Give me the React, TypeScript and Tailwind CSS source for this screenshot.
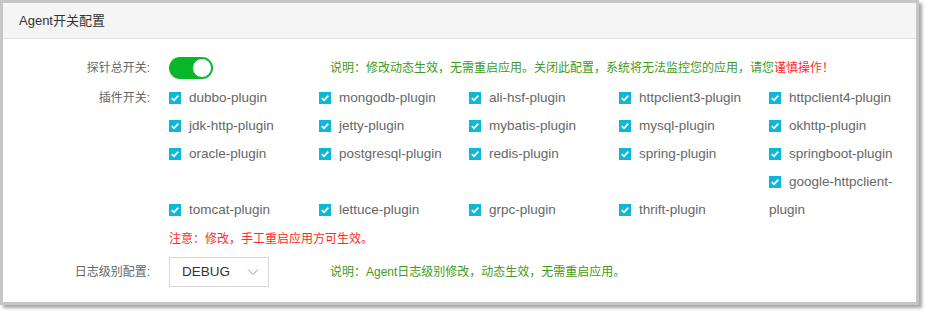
const plugins = [
  "dubbo-plugin",
  "mongodb-plugin",
  "ali-hsf-plugin",
  "httpclient3-plugin",
  "httpclient4-plugin",
  "jdk-http-plugin",
  "jetty-plugin",
  "mybatis-plugin",
  "mysql-plugin",
  "okhttp-plugin",
  "oracle-plugin",
  "postgresql-plugin",
  "redis-plugin",
  "spring-plugin",
  "springboot-plugin",
];

const lastRow = ["tomcat-plugin", "lettuce-plugin", "grpc-plugin", "thrift-plugin"];

function Check() {
  return (
    <span className="inline-flex w-[12px] h-[12px] bg-[#0cb8da] items-center justify-center align-[-1px] mr-[8px]">
      <svg width="10" height="10" viewBox="0 0 10 10">
        <path d="M1.8 5.2 L4 7.3 L8.3 2.6" fill="none" stroke="#fff" strokeWidth="1.8" />
      </svg>
    </span>
  );
}

function Plugin({ name }: { name: string }) {
  return (
    <div className="leading-[28px]">
      <Check />
      {name}
    </div>
  );
}

export default function App() {
  return (
    <div
      className="bg-white w-[929px] h-[314px]"
      style={{ fontFamily: '"Liberation Sans", "Noto Sans CJK SC", sans-serif' }}
    >
      <div className="w-[919px] h-[305px] border-[3px] border-[#c6c6c6] bg-white shadow-[3px_3px_3px_rgba(0,0,0,0.35)] flex flex-col">
        <header className="h-[36px] bg-[#f5f5f5] border-b border-[#e2e2e2] flex items-center pl-[16px] text-[13px] text-[#333]">
          Agent开关配置
        </header>

        <div className="pt-[18px] text-[12px]">
          <div className="flex items-center h-[22px]">
            <div className="w-[147px] text-right text-[#666]">探针总开关:</div>
            <div className="ml-[19px] w-[161px]">
              <div className="w-[44px] h-[22px] rounded-full bg-[#0bb52a] flex items-center justify-end pr-[1px]">
                <div className="w-[20px] h-[20px] rounded-full bg-white border border-[#0bb52a]" />
              </div>
            </div>
            <div className="text-[#3f9a22]">
              说明：修改动态生效，无需重启应用。关闭此配置，系统将无法监控您的应用，请您
              <span className="text-[#ff2b2b]">谨慎操作！</span>
            </div>
          </div>

          <div className="flex mt-[5px]">
            <div className="w-[147px] text-right text-[#666] leading-[28px]">插件开关:</div>
            <div className="ml-[19px]">
              <div className="grid grid-cols-[150px_150px_150px_150px_130px] text-[13.5px] text-[#666]">
                {plugins.map((p) => (
                  <Plugin key={p} name={p} />
                ))}
                <div className="col-start-5 row-span-2 leading-[28px]">
                  <Check />
                  google-httpclient-plugin
                </div>
                {lastRow.map((p, i) => (
                  <div key={p} className={i === 0 ? "col-start-1" : ""}>
                    <Plugin name={p} />
                  </div>
                ))}
              </div>
              <div className="mt-[4px] leading-[22px] text-[#ff2b2b]">注意：修改，手工重启应用方可生效。</div>
            </div>
          </div>

          <div className="flex items-center mt-[7px]">
            <div className="w-[147px] text-right text-[#666]">日志级别配置:</div>
            <div className="ml-[19px] w-[161px]">
              <div className="w-[100px] h-[30px] border border-[#d9d9d9] flex items-center justify-between pl-[12px] pr-[8px] text-[13.5px] text-[#333]">
                DEBUG
                <svg width="14" height="14" viewBox="0 0 14 14">
                  <path d="M2 4.5 L7 9.5 L12 4.5" fill="none" stroke="#9a9a9a" strokeWidth="1" />
                </svg>
              </div>
            </div>
            <div className="text-[#3f9a22]">说明：Agent日志级别修改，动态生效，无需重启应用。</div>
          </div>
        </div>
      </div>
    </div>
  );
}
